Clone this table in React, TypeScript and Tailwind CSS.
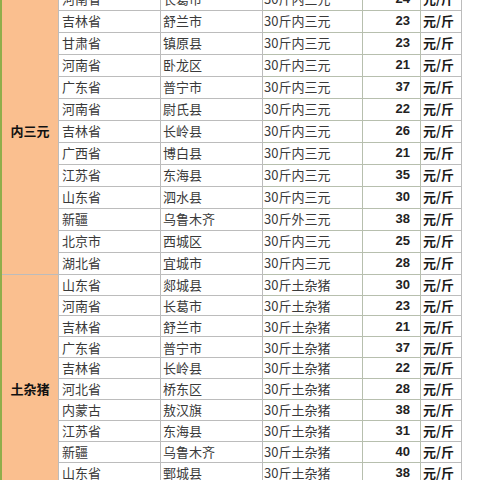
import React from "react";

type Row = [string, string, string, string];

const group1: Row[] = [
  ["河南省", "长葛市", "30斤内三元", "24"],
  ["吉林省", "舒兰市", "30斤内三元", "23"],
  ["甘肃省", "镇原县", "30斤内三元", "23"],
  ["河南省", "卧龙区", "30斤内三元", "21"],
  ["广东省", "普宁市", "30斤内三元", "37"],
  ["河南省", "尉氏县", "30斤内三元", "22"],
  ["吉林省", "长岭县", "30斤内三元", "26"],
  ["广西省", "博白县", "30斤内三元", "21"],
  ["江苏省", "东海县", "30斤内三元", "35"],
  ["山东省", "泗水县", "30斤内三元", "30"],
  ["新疆", "乌鲁木齐", "30斤外三元", "38"],
  ["北京市", "西城区", "30斤内三元", "25"],
  ["湖北省", "宜城市", "30斤内三元", "28"],
];

const group2: Row[] = [
  ["山东省", "郯城县", "30斤土杂猪", "30"],
  ["河南省", "长葛市", "30斤土杂猪", "23"],
  ["吉林省", "舒兰市", "30斤土杂猪", "21"],
  ["广东省", "普宁市", "30斤土杂猪", "37"],
  ["吉林省", "长岭县", "30斤土杂猪", "22"],
  ["河北省", "桥东区", "30斤土杂猪", "28"],
  ["内蒙古", "敖汉旗", "30斤土杂猪", "38"],
  ["江苏省", "东海县", "30斤土杂猪", "31"],
  ["新疆", "乌鲁木齐", "30斤土杂猪", "40"],
  ["山东省", "鄄城县", "30斤土杂猪", "38"],
  ["河南省", "尉氏县", "30斤土杂猪", "30"],
];

function Cells({ r }: { r: Row }) {
  return (
    <>
      <div className="border-r border-b border-[#bcbcbc] pl-[3px] flex items-center text-[13px] text-[#3a3a3a] font-['Noto_Sans_CJK_SC',sans-serif]">
        {r[0]}
      </div>
      <div className="border-r border-b border-[#bcbcbc] pl-[2px] flex items-center text-[13px] text-[#3a3a3a] font-['Noto_Sans_CJK_SC',sans-serif]">
        {r[1]}
      </div>
      <div className="border-r border-b border-[#b7bfae] pl-[1px] flex items-center text-[13px] text-[#3a3a3a] font-['Noto_Sans_CJK_SC',sans-serif]">
        {r[2]}
      </div>
      <div className="border-r border-b border-[#b7bfae] pr-[10px] flex items-center justify-end text-[13px] font-bold text-[#222] font-['Liberation_Sans',Arial,sans-serif]">
        {r[3]}
      </div>
      <div className="border-r border-b border-[#bcbcbc] pl-[2px] flex items-center text-[13px] font-bold text-[#1a1a1a] font-['Noto_Sans_CJK_SC',sans-serif]">
        元/斤
      </div>
    </>
  );
}

export default function App() {
  return (
    <div className="w-[480px] h-[480px] overflow-hidden bg-white">
      <div className="mt-[-11.3px] flex">
        <div className="w-[462px] border-l-2 border-[#8fae4a] grid grid-cols-[57px_102px_102px_100px_58px_41px] grid-rows-[repeat(13,22px)_repeat(11,20.9px)]">
          <div className="row-span-13 bg-[#fabf8f] border-r border-b border-[#bcbcbc] flex items-center justify-center text-[13px] font-bold text-[#111] font-['Noto_Sans_CJK_SC',sans-serif]">
            内三元
          </div>
          {group1.map((r, i) => (
            <Cells key={i} r={r} />
          ))}
          <div className="row-span-11 bg-[#fabf8f] border-r border-b border-[#bcbcbc] flex items-center justify-center text-[13px] font-bold text-[#111] font-['Noto_Sans_CJK_SC',sans-serif]">
            土杂猪
          </div>
          {group2.map((r, i) => (
            <Cells key={i} r={r} />
          ))}
        </div>
        <div className="flex-1 bg-white" />
      </div>
    </div>
  );
}
